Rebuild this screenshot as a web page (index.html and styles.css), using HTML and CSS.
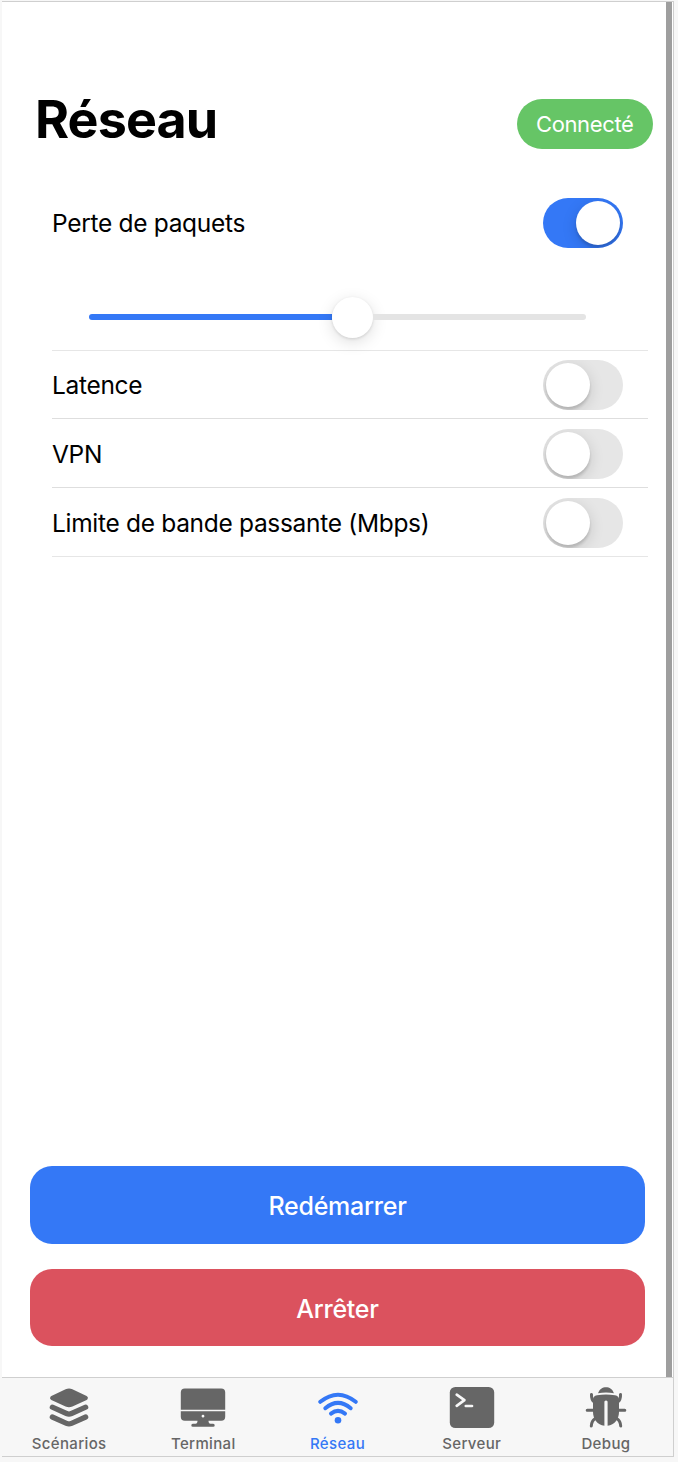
FILE: index.html
```html
<!DOCTYPE html>
<html lang="fr">
<head>
<meta charset="utf-8">
<title>Réseau</title>
<link rel="stylesheet" href="styles.css">
</head>
<body>
<div class="app">
  <main class="content">
    <header class="header">
      <h1 class="title">Réseau</h1>
      <span class="status">Connecté</span>
    </header>
    <section class="list">
      <div class="row row-first">
        <span class="label">Perte de paquets</span>
        <span class="toggle on"><span class="knob"></span></span>
      </div>
      <div class="slider">
        <span class="fill"></span><span class="thumb"></span><span class="rest"></span>
      </div>
      <div class="row"><span class="label">Latence</span><span class="toggle"><span class="knob"></span></span></div>
      <div class="row"><span class="label">VPN</span><span class="toggle"><span class="knob"></span></span></div>
      <div class="row row-last"><span class="label">Limite de bande passante (Mbps)</span><span class="toggle"><span class="knob"></span></span></div>
    </section>
    <div class="actions">
      <button class="button restart">Redémarrer</button>
      <button class="button stop">Arrêter</button>
    </div>
  </main>
  <nav class="tabs">
    <a class="tab">
      <svg class="icon" viewBox="0 0 48 44">
        <path class="sheet" d="M7.300 10.900L21.500 4.300Q24 3.200 26.500 4.300L40.700 10.900L26.500 17.600Q24 18.700 21.500 17.600z"/>
        <path class="edge" d="M7.300 20.200L21.500 26.500Q24 27.600 26.500 26.500L40.700 20.200"/>
        <path class="edge" d="M7.300 30L21.500 36.300Q24 37.400 26.500 36.300L40.700 30"/>
      </svg>
      <span class="caption">Scénarios</span>
    </a>
    <a class="tab">
      <svg class="icon" viewBox="0 0 48 44">
        <path d="M1.800 22.700V5.400Q1.800 1.400 5.800 1.400H42.200Q46.200 1.400 46.200 5.400V22.700z"/>
        <path fill-rule="evenodd" d="M1.800 24.200H46.200V29.700Q46.200 33.700 42.200 33.700H29.500Q29.500 36.700 31.500 36.700H34.200Q35.700 36.700 35.700 38.200T34.200 39.700H13.800Q12.300 39.700 12.300 38.200T13.800 36.700H16.500Q18.500 36.700 18.500 33.700H5.800Q1.800 33.700 1.800 29.700zM24 27.800a1.400 1.400 0 1 0 0 2.800 1.400 1.400 0 0 0 0-2.800z"/>
      </svg>
      <span class="caption">Terminal</span>
    </a>
    <a class="tab selected">
      <svg class="icon" viewBox="0 0 48 44">
        <g class="waves"><path d="M6.300 14.800Q24 .600 41.700 14.800"/><path d="M11.300 21.200Q24 10.600 36.700 21.200"/><path d="M17 26.600Q24 21.200 31 26.600"/></g>
        <circle cx="24" cy="33.200" r="3.300"/>
      </svg>
      <span class="caption">Réseau</span>
    </a>
    <a class="tab">
      <svg class="icon" viewBox="0 0 48 44">
        <rect x="1.800" y="0" width="44.400" height="41" rx="5.500"/>
        <path class="prompt" d="M8.700 7.700L16.400 13.200L8.700 18.800M17.800 19H24"/>
      </svg>
      <span class="caption">Serveur</span>
    </a>
    <a class="tab">
      <svg class="icon" viewBox="0 0 48 44">
        <path d="M16 6.300C17.500 2.100 20.500.2 24 .2s6.500 1.900 8 6.100q-8-1.400-16 0z"/>
        <path d="M22.400 14.500V38.800C15.500 38 11 32 11 25V12.500Q11 9 15 8.200Q24 6.800 33 8.200Q37 9 37 12.500V25C37 32 32.500 38 25.600 38.800V14.500q-1.600-2-3.200 0z"/>
        <path class="legs" d="M9.500 7.500Q9.200 13 12.500 15M38.500 7.500Q38.800 13 35.500 15M5.200 23.300H12M42.800 23.300H36M13 31.700Q9.500 34 9.300 39M35 31.700Q38.500 34 38.700 39"/>
      </svg>
      <span class="caption">Debug</span>
    </a>
  </nav>
</div>
</body>
</html>
```
FILE: styles.css
```css
* { box-sizing: border-box; }
body {
  margin: 0;
  padding: 1px 4px 5px 2px;
  height: 1462px;
  background: #f7f7f7;
  font-family: Inter, "Liberation Sans", sans-serif;
  color: #000;
}
.app {
  height: 1456px;
  display: flex;
  flex-direction: column;
  border: 1px solid #cfcfcf;
  border-left: 0;
  background: #fff;
}
.content {
  flex: 1;
  display: flex;
  flex-direction: column;
  border-right: 6px solid #9e9e9e;
  margin-right: 1px;
}
.header {
  display: flex;
  justify-content: space-between;
  align-items: center;
  height: 50px;
  margin: 96.500px 13.500px 0 33px;
}
.title {
  margin: -7px 0 0;
  font-size: 52px;
  line-height: 60px;
  font-weight: 700;
  letter-spacing: -0.900px;
}
.status {
  width: 135.500px;
  height: 50px;
  border-radius: 25px;
  background: #66c566;
  color: #fff;
  font-size: 22px;
  line-height: 51px;
  letter-spacing: -0.350px;
  text-align: center;
}
.list { margin: 40px 18px 0 50px; }
.row {
  display: flex;
  align-items: center;
  justify-content: space-between;
  height: 68.700px;
  padding: 2px 25px 0 0;
  border-bottom: 1px solid #dedede;
}
.row-first { border: 0; height: 69px; padding-top: 0; }
.row-last { border-color: #e6e6e6; }
.label { font-size: 24.500px; line-height: 34px; letter-spacing: -0.310px; }
.toggle {
  display: flex;
  width: 80px;
  height: 50px;
  padding: 3px;
  border-radius: 25px;
  background: #e6e6e6;
  overflow: hidden;
}
.knob {
  width: 44px;
  height: 44px;
  border-radius: 50%;
  background: #fff;
  box-shadow: 0 4px 15px rgba(0, 0, 0, .14), 0 3px 3px rgba(0, 0, 0, .14);
}
.on { background: #3478f6; justify-content: flex-end; }
.slider {
  display: flex;
  align-items: center;
  height: 93px;
  padding: 27px 62px 0 37px;
  border-bottom: 1px solid #e6e6e6;
}
.fill { width: 243px; height: 6px; border-radius: 3px 0 0 3px; background: #3478f6; }
.thumb {
  width: 41px;
  height: 41px;
  border-radius: 50%;
  background: #fff;
  box-shadow: 0 1px 3px rgba(0, 0, 0, .12), 0 4px 16px rgba(0, 0, 0, .13);
}
.rest { flex: 1; height: 6px; border-radius: 0 3px 3px 0; background: #e4e4e4; }
.actions {
  display: flex;
  flex-direction: column;
  gap: 25px;
  margin: auto 21px 31px 28px;
}
.button {
  height: 77.500px;
  padding: 3px 0 0;
  border: 0;
  border-radius: 22px;
  color: #fff;
  font-family: inherit;
  font-size: 25px;
  font-weight: 450;
  letter-spacing: -0.250px;
}
.restart { background: #3478f6; }
.stop { background: #db525e; }
.tabs {
  display: flex;
  height: 79px;
  border-top: 1px solid #cfcfcf;
  background: #f7f7f7;
}
.tab {
  flex: 1;
  display: flex;
  flex-direction: column;
  align-items: center;
  padding-top: 9px;
  color: #666;
}
.selected { color: #3478f6; }
.icon { width: 48px; height: 44px; fill: currentColor; }
.waves, .legs, .edge { fill: none; stroke: currentColor; stroke-width: 3; stroke-linecap: round; }
.waves { stroke-width: 4; }
.edge { stroke-width: 5.200; }
.sheet { stroke: currentColor; stroke-width: 4.400; stroke-linejoin: round; }
.prompt { fill: none; stroke: #f7f7f7; stroke-width: 2.700; stroke-linecap: round; stroke-linejoin: round; }
.caption {
  margin-top: 3px;
  font-size: 15px;
  line-height: 20px;
  font-weight: 500;
  letter-spacing: 0.350px;
}
```
